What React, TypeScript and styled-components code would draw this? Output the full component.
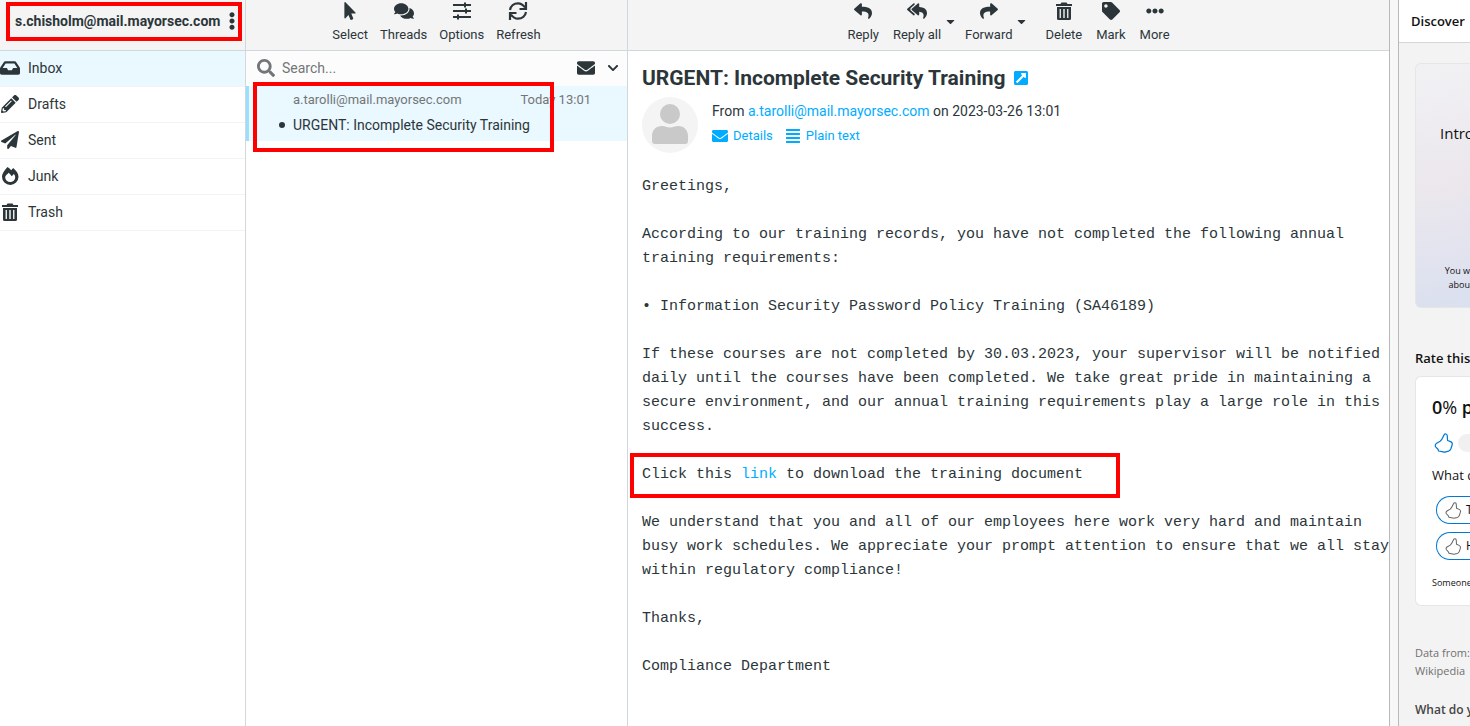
import React from "react";
import styled, { createGlobalStyle, css } from "styled-components";
import {
  FaInbox, FaPencilAlt, FaPaperPlane, FaMousePointer, FaComments, FaReply, FaReplyAll,
  FaShare, FaTag, FaEllipsisH, FaEllipsisV, FaCaretDown, FaSearch, FaEnvelope, FaChevronDown,
  FaAlignJustify, FaExternalLinkSquareAlt,
} from "react-icons/fa";

const ink = "#2c363a";
const line = "#d0d8dc";
const link = "#00acff";
const muted = "#737677";

const GlobalStyle = createGlobalStyle`
  * { box-sizing: border-box; }
  body { margin: 0; background: #fff; color: ${ink}; font: 14px/20px Roboto, sans-serif; }
  button, input { font: inherit; color: inherit; border: 0; padding: 0; margin: 0; background: none; }
  a { color: ${link}; text-decoration: none; }
  h1, h2, p { margin: 0; padding: 0; font-weight: inherit; }
`;

const Shell = styled.div`
  display: grid;
  grid-template-columns: 246px 382px minmax(0, 1fr) 9px 72px;
  min-height: 100vh;
`;

const Column = styled.section`
  display: flex;
  flex-direction: column;
  border-right: 1px solid ${line};
`;

const Bar = styled.header<{ $center?: boolean }>`
  display: flex;
  height: 51px;
  background: #f4f4f4;
  border-bottom: 1px solid ${line};
  ${(p) => p.$center && css`justify-content: center;`}
`;

const Highlight = styled.div<{ $inset: string }>`
  position: absolute;
  inset: ${(p) => p.$inset};
  border: 4px solid #f00;
  pointer-events: none;
`;

const Account = styled(Bar)`
  position: relative;
  align-items: center;
  justify-content: space-between;
  padding: 0 4px 8px 15px;
  font-weight: 700;
`;

const IconButton = styled.button`
  display: flex;
  font-size: 18px;
`;

const Folder = styled.a<{ $active?: boolean }>`
  display: flex;
  align-items: center;
  gap: 8px;
  height: 36px;
  padding-bottom: 2px;
  color: ${ink};
  border-bottom: 1px solid #f1f3f4;
  background: ${(p) => (p.$active ? "#eaf8ff" : "#fff")};
  svg { width: 20px; height: 18px; }
`;

const Tool = styled.button<{ $wide?: boolean }>`
  display: flex;
  flex-direction: column;
  align-items: center;
  gap: 6px;
  height: 50px;
  padding: 2px ${(p) => (p.$wide ? 7 : 6)}px 0;
  font-size: 13px;
  line-height: 18px;
  svg { height: 18px; width: 20px; }
`;

const Caret = styled.button`
  display: flex;
  width: 16px;
  height: 42px;
  margin-left: -6px;
  align-items: center;
  justify-content: center;
  font-size: 13px;
`;

const ToolSpace = styled.span`
  width: 9px;
`;

const SearchBar = styled.form`
  display: flex;
  align-items: center;
  height: 35px;
  padding: 0 8px 2px 11px;
  background: #fcfcfc;
  svg { flex: none; }
`;

const SearchInput = styled.input`
  flex: 1;
  min-width: 0;
  padding: 0 7px;
  outline: 0;
  &::placeholder { color: ${muted}; opacity: 1; }
`;

const FilterButton = styled(IconButton)<{ $small?: boolean }>`
  margin-left: 12px;
  font-size: ${(p) => (p.$small ? 12 : 18)}px;
`;

const Message = styled.a`
  position: relative;
  display: grid;
  grid-template-columns: 1fr auto;
  align-content: start;
  row-gap: 5px;
  height: 55px;
  padding: 4px 36px 0 44px;
  color: ${ink};
  background: #eaf8ff;
  border-left: 3px solid #9bdfff;
`;

const Meta = styled.span`
  color: ${muted};
  font-size: 13px;
`;

const Subject = styled.span`
  grid-column: 1 / -1;
  display: flex;
  align-items: center;
  gap: 8px;
  margin-left: -14px;
  &::before { content: ""; width: 6px; height: 6px; border-radius: 50%; background: ${ink}; }
`;

const Reader = styled.main`
  background: #fff;
`;

const Mail = styled.article`
  padding: 14px 0 0 14px;
`;

const Title = styled.h1`
  display: flex;
  align-items: center;
  gap: 8px;
  font-size: 21px;
  line-height: 26px;
  font-weight: 700;
  svg { display: block; width: 14px; height: 16px; }
`;

const Sender = styled.div`
  display: flex;
  gap: 14px;
  margin: 6px 0 22px;
`;

const SenderText = styled.div`
  display: flex;
  flex-direction: column;
  gap: 5px;
  padding-top: 4px;
`;

const Links = styled.p`
  display: flex;
  gap: 12px;
  font-size: 13px;
  a { display: flex; align-items: center; gap: 5px; }
  svg { width: 16px; height: 16px; }
`;

const Body = styled.div`
  display: flex;
  flex-direction: column;
  gap: 24px;
  font: 15px/24px "Liberation Mono", monospace;
  white-space: pre;
`;

const Boxed = styled.p`
  position: relative;
  width: fit-content;
`;

const Gutter = styled.div`
  background: #f7f7f7;
  border-left: 1px solid #b9b9b9;
`;

const Discover = styled.aside`
  overflow: hidden;
  border-left: 1px solid #b9b9b9;
  background: #f3f3f3;
  color: #111;
  font-family: "Open Sans", sans-serif;
  white-space: nowrap;
`;

const DiscoverTitle = styled.h2`
  height: 43px;
  padding: 11px 0 0 12px;
  font-size: 13px;
  font-weight: 600;
  background: #fff;
  border-bottom: 1px solid #d6d6d6;
`;

const Panel = styled.div`
  display: flex;
  flex-direction: column;
  margin-left: 16px;
  border: 1px solid #e6e6e6;
  border-right: 0;
  border-radius: 6px 0 0 6px;
`;

const Intro = styled(Panel)`
  height: 245px;
  margin-top: 20px;
  padding: 0 0 15px 24px;
  justify-content: space-between;
  background: linear-gradient(170deg, #f1f1f4 0%, #ebe7ec 50%, #e4e4ef 72%, #dae0ef 100%);
`;

const IntroTitle = styled.p`
  padding-top: 59px;
  font-size: 15px;
`;

const Small = styled.p<{ $right?: boolean }>`
  font-size: 9px;
  line-height: 14px;
  ${(p) => p.$right && css`text-align: right;`}
`;

const Label = styled.h2<{ $muted?: boolean }>`
  margin: ${(p) => (p.$muted ? 20 : 40)}px 0 8px 16px;
  font-size: ${(p) => (p.$muted ? 12 : 13)}px;
  font-weight: 600;
  color: ${(p) => (p.$muted ? "#444" : "#111")};
`;

const Rating = styled(Panel)`
  height: 230px;
  padding: 18px 0 0 16px;
  background: #fff;
`;

const Score = styled.p`
  font-size: 18px;
  line-height: 24px;
  b { font-weight: 600; }
`;

const Meter = styled.div`
  display: flex;
  align-items: center;
  gap: 4px;
  margin: 14px 0 12px 2px;
  &::after { content: ""; flex: 1; height: 18px; border-radius: 9px 0 0 9px; background: #f0f0f0; }
`;

const Question = styled.p`
  font-size: 13px;
  margin-bottom: 11px;
`;

const Choice = styled.button`
  display: flex;
  align-items: center;
  gap: 4px;
  height: 28px;
  margin: 0 0 8px 4px;
  padding-left: 8px;
  font-size: 12px;
  border: 1px solid #0078d4;
  border-right: 0;
  border-radius: 14px 0 0 14px;
  svg { flex: none; }
`;

const Closing = styled(Small)`
  margin-top: 8px;
`;

const Source = styled.p`
  margin: 38px 0 0 16px;
  font-size: 11px;
  line-height: 18px;
  color: #707070;
`;

const Trash = () => (
  <svg viewBox="0 0 18 18" fill="currentColor">
    <path d="M1 2h4.500L6.500.5h5L12.500 2H17v2H1z" />
    <path fillRule="evenodd" d="M2 5h14v11.500A1.500 1.500 0 0 1 14.500 18h-11A1.500 1.500 0 0 1 2 16.500zM4.600 7v9h1.300V7zm3.700 0v9h1.400V7zm3.800 0v9h1.300V7z" />
  </svg>
);

const Flame = () => (
  <svg viewBox="0 0 20 18" fill="currentColor">
    <path fillRule="evenodd" d="M7.500 0C9 1 10.200 2 11.200 3.200L13.200 1C16 3.300 18.500 6.500 18.500 9.800A8.300 8.200 0 0 1 10.200 18a8.300 8.200 0 0 1-8.200-8.200C2 7.200 4.500 3 7.500 0zM7.500 7C6 8.200 5.200 9.200 5.200 10.600A4.900 4.600 0 0 0 10.200 15a4.900 4.600 0 0 0 5-4.400c0-1.500-.5-2.600-1.400-3.600L11.800 9.200 8.800 5.800z" />
  </svg>
);

const Sliders = () => (
  <svg viewBox="0 0 20 18" fill="none" stroke="currentColor" strokeWidth="2">
    <path d="M1 3h18M1 9h18M1 15h18M13 .5v5M14 6.500v5M6 12.500v5" />
  </svg>
);

const Sync = () => (
  <svg viewBox="0 0 20 18" fill="none" stroke="currentColor" strokeWidth="2.200">
    <path d="M2 8C2.600 4 6 1.300 10 1.300c3 0 5.200 1.500 7 4.200M18 10c-.6 4-4 6.700-8 6.700-3 0-5.200-1.500-7-4.200M18 0v7h-6.500M2 18v-7h6.500" />
  </svg>
);

const Person = () => (
  <svg width="56" height="56" viewBox="0 0 56 56" role="img" aria-label="Contact photo">
    <circle cx="28" cy="28" r="28" fill="#f4f4f4" />
    <circle cx="28" cy="17" r="10" fill="#c9c9c9" />
    <path fill="#c9c9c9" d="M10 44V39c0-6 4-10 10-10 3 0 5 1.500 8 1.500s5-1.500 8-1.500c6 0 10 4 10 10v5q0 3-3 3H13q-3 0-3-3z" />
  </svg>
);

const Thumb = ({ size, color }: { size: number; color: string }) => (
  <svg width={size} height={size} viewBox="0 0 18 18" fill="none" stroke={color} strokeWidth="1.100" strokeLinejoin="round">
    <path d="M9 1.800c.8-1.500 2.700-1.100 2.900.5l.3 4.400 2.800 1.100c1.300.6 1.700 1.700 1.300 3l-1.200 3.600c-.4 1-1 1.600-2 1.900l-2.600.7c-.8.2-1.500.2-2.300 0l-4-.8-.8-1.800-1.700-1.700c-.9-1-.7-2.500.4-3.200L5.500 7.500C7.300 6.300 8 4 9 1.800z" />
  </svg>
);

const folders = [
  { name: "Inbox", icon: <FaInbox /> },
  { name: "Drafts", icon: <FaPencilAlt /> },
  { name: "Sent", icon: <FaPaperPlane /> },
  { name: "Junk", icon: <Flame /> },
  { name: "Trash", icon: <Trash /> },
];

const listTools = [
  { name: "Select", icon: <FaMousePointer /> },
  { name: "Threads", icon: <FaComments /> },
  { name: "Options", icon: <Sliders /> },
  { name: "Refresh", icon: <Sync /> },
];

export default function App() {
  return (
    <>
      <GlobalStyle />
      <Shell>
        <Column>
          <Account>
            <span>s.chisholm@mail.mayorsec.com</span>
            <IconButton aria-label="Account menu"><FaEllipsisV /></IconButton>
            <Highlight $inset="2px 3px 9px 6px" />
          </Account>
          <nav>
            {folders.map((f, i) => (
              <Folder key={f.name} href="#" $active={i === 0}>{f.icon}{f.name}</Folder>
            ))}
          </nav>
        </Column>
        <Column>
          <Bar $center>
            {listTools.map((t) => <Tool key={t.name}>{t.icon}{t.name}</Tool>)}
          </Bar>
          <SearchBar>
            <FaSearch size={18} color={muted} />
            <SearchInput aria-label="Search" placeholder="Search..." />
            <FilterButton type="button" aria-label="Unread"><FaEnvelope /></FilterButton>
            <FilterButton type="button" aria-label="Search options" $small><FaChevronDown /></FilterButton>
          </SearchBar>
          <Message href="#">
            <Meta>a.tarolli@mail.mayorsec.com</Meta>
            <Meta>Today 13:01</Meta>
            <Subject>URGENT: Incomplete Security Training</Subject>
            <Highlight $inset="-4px 73px -11px 4px" />
          </Message>
        </Column>
        <Reader>
          <Bar $center>
            <Tool $wide><FaReply />Reply</Tool>
            <Tool $wide><FaReplyAll />Reply all</Tool>
            <Caret aria-label="Reply options"><FaCaretDown /></Caret>
            <Tool $wide><FaShare />Forward</Tool>
            <Caret aria-label="Forward options"><FaCaretDown /></Caret>
            <ToolSpace />
            <Tool $wide><Trash />Delete</Tool>
            <Tool $wide><FaTag />Mark</Tool>
            <Tool $wide><FaEllipsisH />More</Tool>
          </Bar>
          <Mail>
            <Title>
              URGENT: Incomplete Security Training
              <a href="#" aria-label="Open in new window"><FaExternalLinkSquareAlt /></a>
            </Title>
            <Sender>
              <Person />
              <SenderText>
                <p>From <a href="#">a.tarolli@mail.mayorsec.com</a> on 2023-03-26 13:01</p>
                <Links>
                  <a href="#"><FaEnvelope />Details</a>
                  <a href="#"><FaAlignJustify />Plain text</a>
                </Links>
              </SenderText>
            </Sender>
            <Body>
              <p>Greetings,</p>
              <p>{"According to our training records, you have not completed the following annual\ntraining requirements:"}</p>
              <p>• Information Security Password Policy Training (SA46189)</p>
              <p>{"If these courses are not completed by 30.03.2023, your supervisor will be notified\ndaily until the courses have been completed. We take great pride in maintaining a\nsecure environment, and our annual training requirements play a large role in this\nsuccess."}</p>
              <Boxed>
                Click this <a href="#">link</a> to download the training document
                <Highlight $inset="-10px -37px -11px -12px" />
              </Boxed>
              <p>{"We understand that you and all of our employees here work very hard and maintain\nbusy work schedules. We appreciate your prompt attention to ensure that we all stay\nwithin regulatory compliance!"}</p>
              <p>Thanks,</p>
              <p>Compliance Department</p>
            </Body>
          </Mail>
        </Reader>
        <Gutter />
        <Discover>
          <DiscoverTitle>Discover</DiscoverTitle>
          <Intro>
            <IntroTitle>Intro</IntroTitle>
            <Small $right>You w<br />abou</Small>
          </Intro>
          <Label>Rate this</Label>
          <Rating>
            <Score><b>0</b>% <b>p</b></Score>
            <Meter><Thumb size={20} color="#0078d4" /></Meter>
            <Question>What d</Question>
            <Choice><Thumb size={17} color="#666" />T</Choice>
            <Choice><Thumb size={17} color="#666" />H</Choice>
            <Closing>Someone</Closing>
          </Rating>
          <Source>Data from:<br />Wikipedia</Source>
          <Label $muted>What do y</Label>
        </Discover>
      </Shell>
    </>
  );
}
